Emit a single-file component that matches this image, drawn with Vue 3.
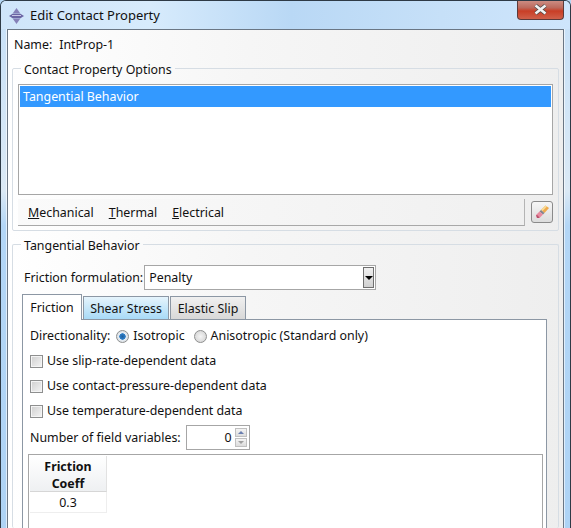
<script setup>
const menus = [
  { key: 'M', rest: 'echanical' },
  { key: 'T', rest: 'hermal' },
  { key: 'E', rest: 'lectrical' },
]
const checks = [
  'Use slip-rate-dependent data',
  'Use contact-pressure-dependent data',
  'Use temperature-dependent data',
]
</script>

<template>
  <div class="window">
    <header class="titlebar">
      <svg class="app-icon" width="15" height="16" viewBox="0 0 15 16">
        <path d="M7.5 0 L11 5 H4 Z" fill="#8580b8" />
        <path d="M7.5 16 L11 11 H4 Z" fill="#8580b8" />
        <path d="M0 8 L4 5.5 H11 L15 8 L11 10.5 H4 Z" fill="#6a65a4" />
        <path d="M3 7 H12 V8 H3 Z" fill="#c9c6e6" />
      </svg>
      <span class="title">Edit Contact Property</span>
      <button class="close">
        <svg width="17" height="11" viewBox="0 0 17 11">
          <path d="M3.5 1.5 L13.5 9.5 M13.5 1.5 L3.5 9.5" stroke="#4a4a4a" stroke-width="4" />
          <path d="M3.5 1.5 L13.5 9.5 M13.5 1.5 L3.5 9.5" stroke="#f4f4f4" stroke-width="2.6" />
        </svg>
      </button>
    </header>

    <main class="client">
      <div class="name-row">
        <span>Name:</span>
        <span>IntProp-1</span>
      </div>

      <fieldset class="group options">
        <legend>Contact Property Options</legend>
        <div class="listbox">
          <div class="list-item">Tangential Behavior</div>
        </div>
        <div class="toolbar-row">
          <div class="menubar">
            <span v-for="m in menus" :key="m.key" class="menu"><u>{{ m.key }}</u>{{ m.rest }}</span>
          </div>
          <button class="erase">
            <svg width="16" height="16" viewBox="0 0 16 16">
              <path d="M7 6 L11.5 1.5 L15 4 L10.5 9 Z" fill="#eeaa4c" />
              <path d="M7 6 L11.5 1.5 L13 2.5 L8.5 7 Z" fill="#f9dc98" />
              <path d="M5.5 7.5 L7 6 L10.5 9 L9 10.5 Z" fill="#84848c" />
              <path d="M2 11 L5.5 7.5 L9 10.5 L5.5 14 L3 14 Z" fill="#e88ba0" />
              <path d="M2 11 L3 14 L5.5 14 L4 11.5 Z" fill="#b9506c" />
            </svg>
          </button>
        </div>
      </fieldset>

      <fieldset class="group behavior">
        <legend>Tangential Behavior</legend>
        <div class="formulation">
          <label>Friction formulation:</label>
          <div class="combo">
            <span class="combo-text">Penalty</span>
            <span class="combo-btn"><i class="arrow"></i></span>
          </div>
        </div>

        <div class="tabs">
          <div class="tab active">Friction</div>
          <div class="tab hover">Shear Stress</div>
          <div class="tab slip">Elastic Slip</div>
        </div>

        <div class="pane">
          <div class="dir-row">
            <span>Directionality:</span>
            <span class="radio on"></span>
            <span>Isotropic</span>
            <span class="radio second"></span>
            <span>Anisotropic (Standard only)</span>
          </div>
          <div v-for="c in checks" :key="c" class="check-row">
            <span class="check"></span>
            <span>{{ c }}</span>
          </div>
          <div class="field-row">
            <span>Number of field variables:</span>
            <div class="spin">
              <span class="spin-value">0</span>
              <span class="spin-btns">
                <span class="sb"><i class="up"></i></span>
                <span class="sb"><i class="down"></i></span>
              </span>
            </div>
          </div>
          <div class="table">
            <div class="th">Friction<br />Coeff</div>
            <div class="td">0.3</div>
          </div>
        </div>
      </fieldset>
    </main>
  </div>
</template>

<style>
html, body { margin: 0; padding: 0; overflow: hidden; background: #b5d6f4; }
</style>

<style scoped>
* { box-sizing: border-box; }
.window {
  width: 571px;
  height: 528px;
  overflow: hidden;
  display: flex;
  flex-direction: column;
  padding: 0 6px;
  background: linear-gradient(180deg, #c6e0f8 0, #dbe9f5 190px, #b3d6f6 225px, #aed3f5 100%);
  border: 1px solid #2e3a46;
  border-bottom: 0;
  border-top-left-radius: 6px;
  border-top-right-radius: 6px;
  font: 12.4px/16px "Noto Sans", sans-serif;
  color: #111;
}
.titlebar {
  height: 28px;
  flex: none;
  display: flex;
  align-items: center;
  margin: 0 -6px;
  padding-left: 8px;
  background: linear-gradient(90deg, #cfe5fa 0, #d7ebfc 150px, #b9d8f5 290px, #c6e0f8 440px, #cee5fc 100%);
  position: relative;
}
.app-icon { flex: none; margin-top: 2px; }
.title { margin-left: 6px; font-size: 13px; color: #101010; }
.close {
  position: absolute;
  right: 6px;
  top: -1px;
  width: 47px;
  height: 20px;
  padding: 0;
  border: 1px solid #5c3a3a;
  border-top: 0;
  border-radius: 0 0 4px 4px;
  background: linear-gradient(180deg, #cf9187 0, #bd6a5d 40%, #c93e26 58%, #d0604a 100%);
  display: flex;
  align-items: center;
  justify-content: center;
}
.client {
  flex: 1;
  min-height: 0;
  border: 1px solid #6a7684;
  border-bottom: 0;
  padding: 0 4px;
  background: linear-gradient(90deg, #fff 0, #f6f6f6 240px, #f2f2f2 400px, #eeeeee 100%);
  box-shadow: 0 0 0 1px rgba(255, 255, 255, 0.6);
  display: flex;
  flex-direction: column;
}
.name-row {
  display: flex;
  gap: 7px;
  height: 16px;
  margin: 7px 0 0 2px;
}
.group {
  margin: 0;
  border: 1px solid #d6dde4;
  border-radius: 2px;
  min-width: 0;
  padding: 0 5px;
}
.group legend {
  padding: 4px 3px 0;
  margin-left: 3px;
  height: 20px;
  line-height: 16px;
}
.options {
  height: 173px;
  margin-top: 5px;
}
.listbox {
  height: 111px;
  margin-top: 6px;
  border: 1px solid #a6a6a6;
  background: #fff;
  padding: 1px;
}
.list-item {
  height: 21px;
  line-height: 21px;
  padding-left: 3px;
  color: #fff;
  background: #3399ff;
}
.toolbar-row {
  display: flex;
  justify-content: space-between;
  margin-top: 4px;
}
.menubar {
  width: 507px;
  height: 27px;
  display: flex;
  align-items: center;
  gap: 15px;
  padding: 1px 0 0 10px;
  border-right: 1px solid #b4b4b4;
  border-bottom: 1px solid #a8a8a8;
  background: linear-gradient(90deg, #fafafa, #f0f0f0);
}
.erase {
  width: 22px;
  height: 22px;
  margin-top: 2px;
  padding: 0;
  border: 1px solid #8a8a8a;
  border-radius: 3px;
  background: linear-gradient(180deg, #f6f6f6, #dcdcdc);
  display: flex;
  align-items: center;
  justify-content: center;
}
.behavior {
  flex: 1;
  min-height: 0;
  margin-top: 3px;
  border-bottom: 0;
  padding: 0 10px 0 9px;
  overflow: hidden;
}
.behavior legend { margin-left: -1px; }
.formulation {
  display: flex;
  align-items: center;
  margin-top: 11px;
  margin-left: 2px;
}
.combo {
  width: 232px;
  height: 25px;
  margin-left: 1px;
  border: 1px solid #a6a6a6;
  background: #fff;
  display: flex;
  align-items: center;
  justify-content: space-between;
  padding: 1px 1px 1px 4px;
}
.combo-btn {
  width: 11px;
  height: 21px;
  border: 1px solid #6f6f6f;
  background: linear-gradient(180deg, #f0f0f0, #d0d0d0);
  display: flex;
  align-items: center;
  justify-content: center;
}
.arrow {
  width: 0;
  height: 0;
  border: 4px solid transparent;
  border-top: 4px solid #000;
  border-bottom: 0;
}
.tabs {
  display: flex;
  align-items: flex-end;
  gap: 1px;
  margin-top: 4px;
  height: 25px;
}
.tab {
  height: 23px;
  line-height: 23px;
  width: 86px;
  text-align: center;
  border: 1px solid #8c97a4;
  border-bottom: 0;
  background: linear-gradient(180deg, #f0f0f0, #d8d8d8);
}
.tab.active {
  width: 60px;
  background: #fff;
  position: relative;
  z-index: 1;
  height: 26px;
  line-height: 24px;
  padding-top: 1px;
  margin-bottom: -1px;
}
.tab.hover {
  background: linear-gradient(180deg, #e6f4fc, #a8daf7);
}
.tab.slip { width: 76px; }
.pane {
  width: 525px;
  height: 210px;
  border: 1px solid #8c97a4;
  border-bottom: 0;
  background: #fff;
  padding: 0 5px 0 7px;
}
.dir-row {
  display: flex;
  align-items: center;
  height: 16px;
  margin-top: 8px;
}
.radio {
  width: 13px;
  height: 13px;
  border-radius: 50%;
  border: 1px solid #8e8f8f;
  background: radial-gradient(circle, #f4f4f4 0, #cfcfcf 100%);
  margin: 0 4px 0 6px;
}
.radio.on {
  background: radial-gradient(circle, #1f5f9e 0, #2f7fc8 38%, #e8eef4 44%, #cfd4d8 100%);
}
.radio.second { margin-left: 9px; }
.check-row {
  display: flex;
  align-items: center;
  gap: 4px;
  height: 16px;
  margin-top: 9px;
}
.check {
  width: 13px;
  height: 13px;
  border: 1px solid #8e8f8f;
  background: linear-gradient(135deg, #cfcfcf, #f4f4f4);
  box-shadow: inset 0 0 0 1px #f4f4f4;
}
.field-row {
  display: flex;
  align-items: center;
  gap: 5px;
  margin-top: 6px;
}
.spin {
  width: 64px;
  height: 25px;
  border: 1px solid #a6a6a6;
  background: #fff;
  display: flex;
  align-items: center;
  justify-content: flex-end;
  padding-right: 2px;
}
.spin-value { margin-right: 3px; }
.spin-btns { display: flex; flex-direction: column; gap: 1px; }
.sb {
  width: 12px;
  height: 9px;
  border: 1px solid #c0c0c0;
  background: linear-gradient(180deg, #f4f4f4, #dcdcdc);
  display: flex;
  align-items: center;
  justify-content: center;
}
.up, .down { width: 0; height: 0; border: 3px solid transparent; }
.up { border-bottom: 3px solid #6a7fb0; border-top: 0; }
.down { border-top: 3px solid #a0a0a0; border-bottom: 0; }
.table {
  width: 515px;
  height: 90px;
  margin: 4px 0 0 -2px;
  border: 1px solid #a6a6a6;
  border-bottom: 0;
  padding: 1px;
  background: #fff;
}
.th {
  width: 77px;
  height: 36px;
  padding-top: 2px;
  text-align: center;
  font-weight: 700;
  line-height: 17px;
  background: linear-gradient(180deg, #fff, #eef0f2);
  border-right: 1px solid #e2e2e2;
  border-bottom: 1px solid #d6d6d6;
}
.td {
  width: 77px;
  height: 21px;
  line-height: 21px;
  text-align: center;
  border-right: 1px solid #eee;
  border-bottom: 1px solid #eee;
}
</style>
